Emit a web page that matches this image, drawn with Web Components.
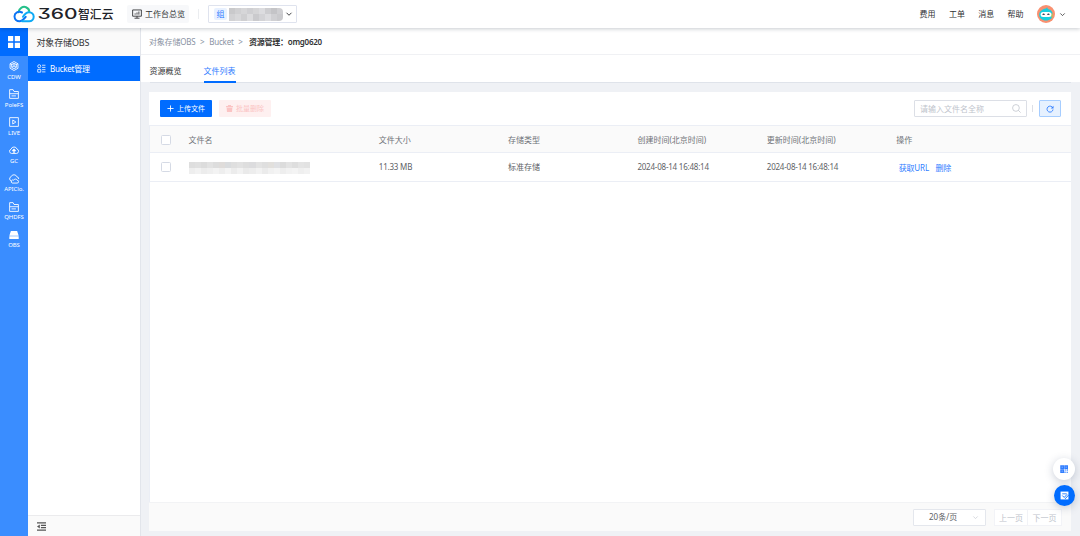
<!DOCTYPE html>
<html lang="zh-CN">
<head>
<meta charset="utf-8">
<title>对象存储OBS</title>
<style>
  html, body { margin: 0; height: 100%; overflow: hidden; }
  body {
    --primary: #006cff;
    --link: #2f7dff;
    --line: #ebeef5;
    --text: #606266;
    font-family: "Noto Sans", "Noto Sans CJK SC", sans-serif;
    font-size: 8px;
    line-height: 12px;
    color: var(--text);
    background: #eff1f5;
  }
</style>
</head>
<body>
<obs-console></obs-console>

<script>
const ICONS = {
  grid: '<path fill="currentColor" d="M0 0h7v7H0zM9 0h7v7H9zM0 9h7v7H0zM9 9h7v7H9z"/>',
  hex: '<path d="M8 .8l6.3 3.6v7.2L8 15.2l-6.3-3.6V4.4z"/><circle cx="8" cy="8" r="4"/><path d="M8 4v4l-3.5 2M8 8l3.5 2M1.7 4.4L5 6M14.3 4.4L11 6"/>',
  folder: '<path d="M1 15V1h5.5L8 4h7v11zM1 7.5h14M4 11h7"/>',
  live: '<path d="M1 1h14v14H1z"/><path d="M6 4.8v6.4L11 8z"/>',
  cloudUp: '<path d="M4 13.5a3.5 3.5 0 0 1-.7-6.8 5 5 0 0 1 9.5-.2 3.6 3.6 0 0 1-.6 7z"/><path d="M8 13V7M5.5 9.5L8 7l2.5 2.5" stroke-width="2"/>',
  cloudApi: '<path d="M4 11a3.4 3.4 0 0 1-.7-6.6 5 5 0 0 1 9.4.2A3.2 3.2 0 0 1 15.5 8"/><path d="M5 14.5h8a2.3 2.3 0 0 0 0-4.6 3 3 0 0 0-5.5 0A2.3 2.3 0 0 0 5 14.5z"/>',
  disk: '<path fill="currentColor" d="M3 1.5h10l2.5 7.5H.5zM.5 10h15v4.5H.5z" stroke="none"/>',
  bucket: '<circle cx="4" cy="4" r="2.7"/><path d="M1.3 9.5h5.4v5H1.3zM9 2.2h6M9 6h6M9 10h6M9 14h6"/>',
  monitor: '<path d="M1 1.5h14v10H1zM8 11.5v3M4 14.7h8"/><path d="M5 9V7M8 9V5.5M11 9V4"/>',
  down: '<path d="M3 5.5l5 5 5-5"/>',
  plus: '<path d="M8 1v14M1 8h14"/>',
  trash: '<path fill="currentColor" stroke="none" d="M0 2.5h4.5V0h7v2.5H16V5H0zM1.5 6h13l-.7 10H2.2z"/>',
  search: '<circle cx="7" cy="7" r="6"/><path d="M11.3 11.3l4 4"/>',
  refresh: '<path d="M13.6 6A6 6 0 1 0 14 9"/><path fill="currentColor" stroke="none" d="M15 1.5v5.3h-5.3z"/>',
  fold: '<path d="M0 1.5h16M7 6h9M7 10h9M0 14.5h16" stroke-width="2"/><path fill="currentColor" stroke="none" d="M5 4.5v7L0 8z"/>',
  qr: '<path d="M2 2h4.5v4.5H2zM10 2h4.500v4.500H10zM2 10h4.500v4.500H2z" stroke-width="3"/><path d="M9 10h3M14.500 8.500v3M10 13v3M13 14.500h3" stroke-width="2.4"/>',
  form: '<path fill="currentColor" stroke="none" d="M1 1h14v14H1z"/><path stroke="#006cff" d="M4 5h8"/><path stroke="#006cff" stroke-width="1.6" d="M4 8l3.500 3.500L12.500 6M9 14l6.500-7"/>'
};

customElements.define(
  "ui-icon",
  class extends HTMLElement {
    connectedCallback() {
      const size = this.getAttribute("size") || 10;
      const weight = this.getAttribute("weight") || 1.4;
      this.attachShadow({ mode: "open" }).innerHTML = `
        <style>
          :host { display: inline-flex; flex: none; width: ${size}px; height: ${size}px; }
          svg { width: 100%; height: 100%; overflow: visible; }
        </style>
        <svg viewBox="0 0 16 16" fill="none" stroke="currentColor" stroke-width="${weight}">${ICONS[this.getAttribute("name")]}</svg>
      `;
    }
  }
);

// masked value: a strip of grey tiles
customElements.define(
  "masked-text",
  class extends HTMLElement {
    connectedCallback() {
      const rows = this.getAttribute("tones").split("|").map((r) => r.trim().split(" "));
      this.attachShadow({ mode: "open" }).innerHTML = `
        <style>
          :host { display: grid; flex: none; overflow: hidden; grid-template-columns: repeat(${rows[0].length}, 1fr); grid-auto-rows: 1fr; }
        </style>
        ${rows.flat().map((tone) => `<i style="background:#${tone}"></i>`).join("")}
      `;
    }
  }
);

customElements.define(
  "brand-logo",
  class extends HTMLElement {
    connectedCallback() {
      this.attachShadow({ mode: "open" }).innerHTML = `
        <style>
          :host { display: block; width: 101px; height: 20px; }
          svg { display: block; }
          .digits { font-feature-settings: "cv09"; }
        </style>
        <svg width="101" height="20" viewBox="0 0 101 20" fill="none" stroke-linecap="round">
          <path d="M5.5 8.2C6.5 3.9 10 2 13 3.2c2 .8 3.2 2.4 3.3 4.5" stroke="#25c08a" stroke-width="2"/>
          <path d="M9 8.5C5.5 6.7 1.5 9 1.5 12.3c0 3.2 2.3 4.900 5 4.900 2.5 0 4-1.7 6.2-4.4" stroke="#0b74f5" stroke-width="2"/>
          <path d="M9 17.2h7.2c2.5 0 4.500-1.900 4.500-4.400 0-2.7-2.1-4.6-4.7-4.6-2.8 0-4.5 2.2-6 4.6" stroke="#0eaaf5" stroke-width="2"/>
          <g fill="#1f2329">
            <text class="digits" x="24.5" y="15.3" font-family="Inter, sans-serif" font-size="14" font-weight="500" textLength="40" lengthAdjust="spacingAndGlyphs">360</text>
            <text x="65" y="14.8" font-family="'Noto Sans CJK SC', sans-serif" font-size="12" font-weight="500" textLength="35.5" lengthAdjust="spacingAndGlyphs">智汇云</text>
          </g>
        </svg>
      `;
    }
  }
);

customElements.define(
  "top-bar",
  class extends HTMLElement {
    connectedCallback() {
      this.attachShadow({ mode: "open" }).innerHTML = `
        <style>
          :host {
            display: flex; align-items: center; box-sizing: border-box; height: 28px;
            padding: 0 14px 0 13px; background: #fff; color: #303133;
            box-shadow: 0 1px 4px rgba(0, 21, 41, .22); position: relative; z-index: 2;
          }
          .overview {
            display: flex; align-items: center; gap: 3px; height: 18px; padding: 0 4px 0 5px;
            margin-left: 13px; background: #f7f8fa; border-radius: 2px;
          }
          .split { width: 1px; height: 10px; margin: 0 9px; background: #ebedf0; }
          .group {
            display: flex; align-items: center; box-sizing: border-box; width: 89px; height: 18px;
            padding: 0 3px 0 5px; border: 1px solid #dfe3ee; border-radius: 1px;
          }
          .tag { width: 14px; height: 12px; text-align: center; color: var(--link); background: #e8f1ff; border-radius: 2px; margin-right: 2px; }
          masked-text { width: 54px; height: 13px; margin-right: 2px; border-radius: 0 4px 4px 0; }
          nav { display: flex; align-items: center; gap: 13.3px; margin-left: auto; margin-right: 13.5px; }
          .avatar { display: block; margin-right: 4px; }
        </style>
        <brand-logo></brand-logo>
        <div class="overview"><ui-icon name="monitor" size="10"></ui-icon><span>工作台总览</span></div>
        <div class="split"></div>
        <div class="group">
          <span class="tag">组</span>
          <masked-text tones="c9c9cb d0d0d2 d6d6d8 cfcfd2 d5d5d7 dcdcdf cdcdd0 c4c4c7 cfcfd2|d2d2d4 d8d8da cfcfd1 dcdcde cacacd d3d3d6 dcdcdf d0d0d3 cacacd"></masked-text>
          <ui-icon name="down" size="8" weight="1.8"></ui-icon>
        </div>
        <nav><span>费用</span><span>工单</span><span>消息</span><span>帮助</span></nav>
        <svg class="avatar" width="18" height="18" viewBox="0 0 18 18">
          <circle cx="9" cy="9" r="9" fill="#f99070"/>
          <path d="M9 3.5l1.2-1.2.6 1.8C14 4.6 15.8 7 15.8 10c0 3.2-3 5.5-6.8 5.5S2.2 13.2 2.2 10C2.2 6.6 5 4 9 3.500z" fill="#15cfe0"/>
          <path d="M14.5 8c1.6 0 2 4-.2 4.5z" fill="#f6b431"/>
          <rect x="3.6" y="7" width="10.8" height="5" rx="2.5" fill="#fff"/>
          <path d="M5.7 9.8q.9-1.400 1.800 0M10.500 9.800q.9-1.400 1.800 0" stroke="#26334d" stroke-width="1.200" fill="none"/>
        </svg>
        <ui-icon name="down" size="7" weight="1.8"></ui-icon>
      `;
    }
  }
);

customElements.define(
  "rail-item",
  class extends HTMLElement {
    connectedCallback() {
      this.attachShadow({ mode: "open" }).innerHTML = `
        <style>
          :host { display: flex; flex-direction: column; align-items: center; height: 28.15px; color: #fff; font-size: 6px; line-height: 8px; letter-spacing: -.05px; }
          ui-icon { margin: 5px 0 1.5px; }
          span { white-space: nowrap; }
        </style>
        <ui-icon name="${this.getAttribute("icon")}" size="10" weight="1.4"></ui-icon>
        <span><slot></slot></span>
      `;
    }
  }
);

customElements.define(
  "product-rail",
  class extends HTMLElement {
    connectedCallback() {
      this.attachShadow({ mode: "open" }).innerHTML = `
        <style>
          :host { display: block; width: 28px; flex: none; background: #3a8dff; }
          .all { display: flex; align-items: center; justify-content: center; height: 28px; color: #fff; background: var(--primary); }
        </style>
        <div class="all"><ui-icon name="grid" size="12" weight="0"></ui-icon></div>
        <rail-item icon="hex">CDW</rail-item>
        <rail-item icon="folder">PoleFS</rail-item>
        <rail-item icon="live">LIVE</rail-item>
        <rail-item icon="cloudUp">GC</rail-item>
        <rail-item icon="cloudApi">APIClo.</rail-item>
        <rail-item icon="folder">QHDFS</rail-item>
        <rail-item icon="disk">OBS</rail-item>
      `;
    }
  }
);

customElements.define(
  "side-menu",
  class extends HTMLElement {
    connectedCallback() {
      this.attachShadow({ mode: "open" }).innerHTML = `
        <style>
          :host { display: flex; flex-direction: column; box-sizing: border-box; width: 113px; flex: none; background: #fff; border-right: 1px solid #e2e5eb; }
          header { height: 28px; padding-left: 8.5px; font-size: 9px; line-height: 29px; letter-spacing: -.15px; color: #303133; background: #fafafa; }
          .item { display: flex; align-items: center; gap: 4px; height: 25px; padding-left: 9px; color: #fff; background: var(--primary); letter-spacing: -.25px; }
          footer { display: flex; align-items: center; box-sizing: border-box; height: 21px; margin-top: auto; padding-left: 9px; color: #555; background: #fafafa; border-top: 1px solid #ebebed; }
        </style>
        <header>对象存储OBS</header>
        <div class="item"><ui-icon name="bucket" size="9"></ui-icon><span>Bucket管理</span></div>
        <footer><ui-icon name="fold" size="9"></ui-icon></footer>
      `;
    }
  }
);

customElements.define(
  "page-head",
  class extends HTMLElement {
    connectedCallback() {
      this.attachShadow({ mode: "open" }).innerHTML = `
        <style>
          :host { display: block; height: 54px; background: #fff; }
          .crumbs { display: flex; align-items: center; box-sizing: border-box; height: 27px; padding: 1px 0 0 8px; color: #8a93a3; border-bottom: 1px solid #f0f1f4; }
          .crumbs span { letter-spacing: -.2px; }
          .crumbs i { font-style: normal; margin: 0 4.6px; }
          .crumbs b { color: #303133; font-weight: 600; margin-left: 1.5px; letter-spacing: -.25px; }
          .tabs { display: flex; gap: 22px; box-sizing: border-box; height: 28px; margin: 0 9px 0 8.5px; color: #303133; line-height: 32px; border-bottom: 1px solid #dfe3ea; }
          .tabs .on { color: var(--link); box-sizing: border-box; height: 28px; border-bottom: 2px solid var(--primary); }
        </style>
        <div class="crumbs"><span>对象存储OBS</span><i>&gt;</i><span>Bucket</span><i>&gt;</i><b>资源管理：omg0620</b></div>
        <div class="tabs"><span>资源概览</span><span class="on">文件列表</span></div>
      `;
    }
  }
);

customElements.define(
  "file-toolbar",
  class extends HTMLElement {
    connectedCallback() {
      this.attachShadow({ mode: "open" }).innerHTML = `
        <style>
          :host { display: flex; align-items: center; height: 33px; padding: 0 10px 0 11px; background: #fff; }
          .btn { display: flex; align-items: center; justify-content: center; gap: 3px; box-sizing: border-box; width: 52px; height: 17px; margin-right: 7px; border-radius: 1px; font-size: 7px; }
          .upload { color: #fff; background: var(--primary); }
          .remove { color: #fbc4c4; background: #fef0f0; }
          .search { display: flex; align-items: center; justify-content: space-between; box-sizing: border-box; width: 113px; height: 17px; margin-left: auto; padding: 0 5px; color: #c0c4cc; border: 1px solid #dcdfe6; border-radius: 1px; }
          .bar { width: 1px; height: 7px; margin: 0 6px 0 5px; background: #dcdfe6; }
          .reload { display: flex; align-items: center; justify-content: center; box-sizing: border-box; width: 22px; height: 17px; color: var(--link); background: #e6f1ff; border: 1px solid #a6cdff; border-radius: 1px; }
        </style>
        <div class="btn upload"><ui-icon name="plus" size="7" weight="2"></ui-icon><span>上传文件</span></div>
        <div class="btn remove"><ui-icon name="trash" size="7"></ui-icon><span>批量删除</span></div>
        <div class="search"><span>请输入文件名全称</span><ui-icon name="search" size="9"></ui-icon></div>
        <div class="bar"></div>
        <div class="reload"><ui-icon name="refresh" size="8" weight="1.8"></ui-icon></div>
      `;
    }
  }
);

customElements.define(
  "file-table",
  class extends HTMLElement {
    connectedCallback() {
      this.attachShadow({ mode: "open" }).innerHTML = `
        <style>
          :host { display: block; flex: 1; background: #fff; border-left: 1px solid var(--line); border-top: 1px solid var(--line); }
          .row {
            display: grid; grid-template-columns: 38.5px 190.3px 129.3px 129.3px 129.4px 129.4px 1fr;
            align-items: center; box-sizing: border-box; height: 29px; border-bottom: 1px solid var(--line);
          }
          .head { height: 27px; padding-top: 1px; background: #fafafa; color: #6f7278; }
          .check { box-sizing: border-box; width: 10px; height: 10px; margin-left: 11px; background: #fff; border: 1px solid #d5dae5; border-radius: 1.5px; }
          .num { letter-spacing: -.22px; }
          .size { letter-spacing: -.2px; }
          .ops { display: flex; gap: 6.5px; padding: 2px 0 0 2.5px; color: var(--link); letter-spacing: -.15px; }
          masked-text { width: 122px; height: 12px; margin-top: 1px; }
        </style>
        <div class="row head">
          <i class="check"></i><span>文件名</span><span>文件大小</span><span>存储类型</span>
          <span>创建时间(北京时间)</span><span>更新时间(北京时间)</span><span>操作</span>
        </div>
        <div class="row">
          <i class="check"></i>
          <masked-text tones="dedede e0e0e0 dcdcdc e2e2e2 dddddd dfdcda dadcde dfdfdf e2e2e2 dedede dcdcde e3e3e3 dfdfdf e2e0dd e0e1e4 dcdcdc e3e3e3 dedede e4e4e4 e2e2e2|eeeeee f2f2f2 ececec efefef f3f3f3 eeeeee f4f4f4 ececec f2f2f2 eaeaea ededed f2f2f2 ebebeb f1f1f1 f4f4f4 eeeeee f2f2f2 f4f4f4 efefef f2f2f2"></masked-text>
          <span class="size">11.33 MB</span><span>标准存储</span>
          <span class="num">2024-08-14 16:48:14</span><span class="num">2024-08-14 16:48:14</span>
          <span class="ops"><span>获取URL</span><span>删除</span></span>
        </div>
      `;
    }
  }
);

customElements.define(
  "page-footer",
  class extends HTMLElement {
    connectedCallback() {
      this.attachShadow({ mode: "open" }).innerHTML = `
        <style>
          :host { display: flex; align-items: center; justify-content: flex-end; box-sizing: border-box; height: 29px; padding: 1px 9px 0 0; background: #fafafa; border-top: 1px solid #f2f3f5; }
          .size { display: flex; align-items: center; justify-content: space-between; box-sizing: border-box; width: 73px; height: 17px; padding: 0 6px 0 15px; margin-right: 8px; background: #fff; border: 1px solid #e4e7ed; border-radius: 1px; }
          .size ui-icon { color: #c0c4cc; }
          .pager { display: flex; color: #c0c4cc; background: #fff; }
          .pager span { box-sizing: border-box; width: 34px; height: 17px; line-height: 15px; text-align: center; border: 1px solid #f2f3f7; }
          .pager span + span { border-left: 0; }
        </style>
        <div class="size"><span>20条/页</span><ui-icon name="down" size="7"></ui-icon></div>
        <div class="pager"><span>上一页</span><span>下一页</span></div>
      `;
    }
  }
);

customElements.define(
  "float-actions",
  class extends HTMLElement {
    connectedCallback() {
      this.attachShadow({ mode: "open" }).innerHTML = `
        <style>
          :host { position: absolute; right: 5px; bottom: 30px; z-index: 3; display: flex; flex-direction: column; align-items: flex-end; gap: 5px; }
          div { display: flex; align-items: center; justify-content: center; width: 22px; height: 22px; border-radius: 50%; color: var(--link); background: #fff; box-shadow: 0 2px 8px rgba(40, 60, 100, .25); }
          .ask { width: 21px; height: 21px; color: #fff; background: var(--primary); }
        </style>
        <div><ui-icon name="qr" size="8"></ui-icon></div>
        <div class="ask"><ui-icon name="form" size="9"></ui-icon></div>
      `;
    }
  }
);

customElements.define(
  "obs-console",
  class extends HTMLElement {
    connectedCallback() {
      this.attachShadow({ mode: "open" }).innerHTML = `
        <style>
          :host { display: flex; flex-direction: column; height: 100vh; position: relative; }
          .body { display: flex; flex: 1; min-height: 0; }
          main { display: flex; flex-direction: column; flex: 1; min-width: 0; }
          .card { display: flex; flex-direction: column; flex: 1; margin: 10px 9px 5.5px 8px; }
        </style>
        <top-bar></top-bar>
        <div class="body">
          <product-rail></product-rail>
          <side-menu></side-menu>
          <main>
            <page-head></page-head>
            <div class="card">
              <file-toolbar></file-toolbar>
              <file-table></file-table>
              <page-footer></page-footer>
            </div>
          </main>
        </div>
        <float-actions></float-actions>
      `;
    }
  }
);
</script>
</body>
</html>
